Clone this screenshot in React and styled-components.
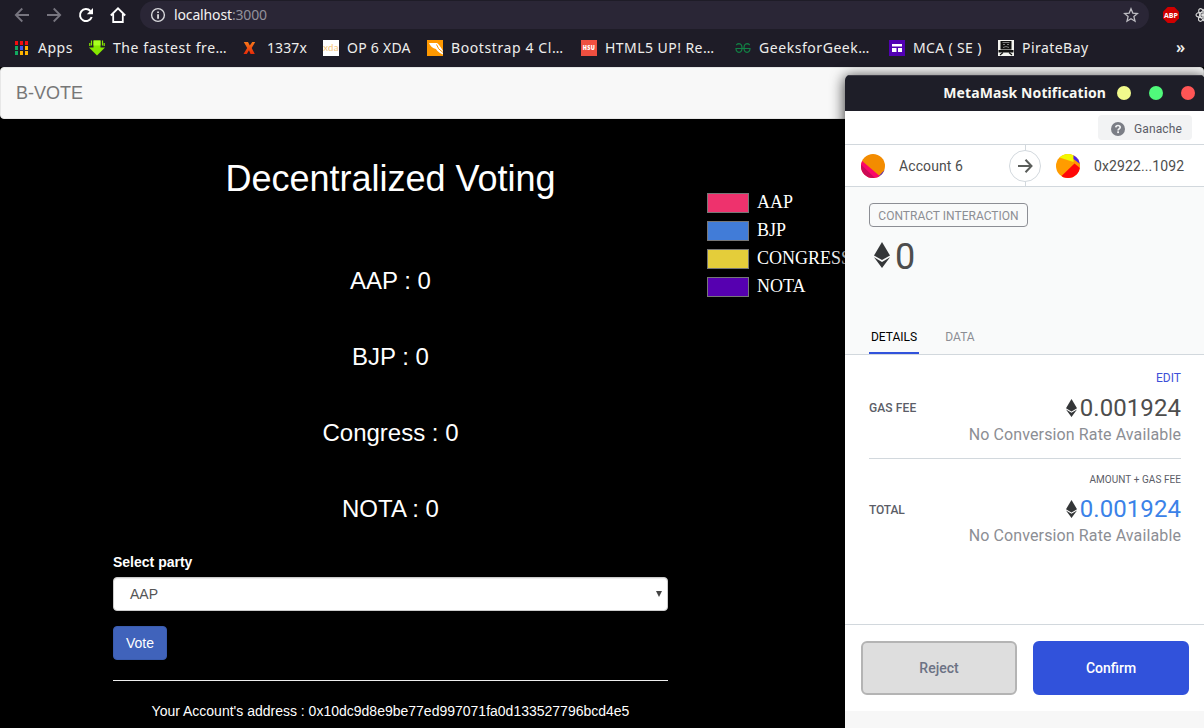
import React from 'react';
import styled, { createGlobalStyle } from 'styled-components';

const Global = createGlobalStyle`
  *, *::before, *::after { box-sizing: border-box; }
  html, body { margin: 0; padding: 0; background: #000; }
  body { width: 1204px; height: 728px; overflow: hidden; }
`;

const ubuntu = `'Noto Sans', 'Open Sans', sans-serif`;
const arial = `'Liberation Sans', Arial, sans-serif`;

const Screen = styled.div`
  position: relative;
  width: 1204px;
  height: 728px;
  overflow: hidden;
  background: #000;
  display: flex;
  flex-direction: column;
`;

/* ---------- browser chrome ---------- */
const Chrome = styled.header`
  height: 67px;
  flex: none;
  background: #1e1c27;
  font-family: ${ubuntu};
  color: #eeeeec;
`;
const Toolbar = styled.div`
  display: flex;
  align-items: center;
  height: 29px;
  padding: 1px 0 0 14px;
`;
const NavIcons = styled.div`
  display: flex;
  gap: 16px;
  width: 126px;
  flex: none;
`;
const AddressBar = styled.div`
  display: flex;
  align-items: center;
  flex: none;
  width: 1009px;
  height: 28px;
  padding: 0 10px;
  border-radius: 14px;
  background: #2a2636;
`;
const Url = styled.span`
  flex: 1;
  margin-left: 8px;
  font-size: 14px;
  line-height: 20px;
  letter-spacing: -0.14px;
  color: #f2f2f2;
  em { font-style: normal; color: #93919b; }
`;
const Extensions = styled.div`
  display: flex;
  gap: 16px;
  margin-left: 14px;
  flex: none;
`;
const BookmarkBar = styled.nav`
  display: flex;
  align-items: center;
  height: 38px;
  padding-left: 13px;
`;
const Bookmark = styled.a`
  display: flex;
  align-items: center;
  flex: none;
  gap: ${p => p.$gap || 8}px;
  width: ${p => p.$w}px;
  font-size: 14px;
  line-height: 20px;
  white-space: nowrap;
  letter-spacing: ${p => p.$ls}px;
  svg { flex: none; }
`;
const More = styled.span`
  flex: none;
  margin-left: 2px;
  padding-bottom: 2px;
  font-size: 16px;
  line-height: 20px;
  font-weight: 600;
`;

/* ---------- page ---------- */
const Navbar = styled.div`
  flex: none;
  height: 52px;
  padding: 15px;
  border: 1px solid #e7e7e7;
  border-radius: 4px;
  background: #f8f8f8;
  font: 18px/20px ${arial};
  color: #777;
`;
const Page = styled.main`
  display: flex;
  align-items: flex-start;
  padding-left: 113px;
  font-family: ${arial};
  color: #fff;
`;
const Ballot = styled.section`
  width: 555px;
  margin-right: 39px;
  padding-top: 40px;
`;
const Title = styled.h1`
  margin: 0 0 44px;
  font-size: 36px;
  line-height: 40px;
  font-weight: 400;
  text-align: center;
`;
const Tally = styled.h3`
  margin: 0;
  font-size: 24px;
  line-height: 76px;
  font-weight: 400;
  text-align: center;
`;
const Label = styled.label`
  display: block;
  margin: 5px 0;
  font-size: 14px;
  line-height: 20px;
  font-weight: 700;
`;
const Select = styled.div`
  display: flex;
  align-items: center;
  justify-content: space-between;
  height: 34px;
  padding: 0 5px 0 16px;
  border: 1px solid #ccc;
  border-radius: 4px;
  box-shadow: inset 0 1px 1px rgba(0, 0, 0, 0.075);
  background: #fff;
  font-size: 14px;
  color: #555;
`;
const VoteButton = styled.button`
  display: block;
  width: 54px;
  height: 34px;
  margin: 15px 0 20px;
  padding: 0;
  border: 1px solid #3a5cae;
  border-radius: 4px;
  background: #4063bb;
  font: 14px/20px ${arial};
  color: #fff;
`;
const Rule = styled.hr`
  height: 1px;
  margin: 0 0 20px;
  border: 0;
  background: #eee;
`;
const Account = styled.p`
  margin: 0;
  font-size: 14px;
  line-height: 20px;
  text-align: center;
`;
const Legend = styled.ul`
  display: flex;
  flex-direction: column;
  gap: 8px;
  margin: 0;
  padding: 74px 0 0;
  list-style: none;
`;
const LegendItem = styled.li`
  display: flex;
  gap: 8px;
  height: 20px;
  font: 18px/18px 'Liberation Serif', serif;
  &::before {
    content: '';
    width: 42px;
    height: 20px;
    border: 1px solid #777;
    background: ${p => p.$color};
  }
`;

/* ---------- wallet window ---------- */
const Wallet = styled.aside`
  position: absolute;
  left: 845px;
  top: 75px;
  width: 360px;
  height: 670px;
  border-radius: 5px 5px 0 0;
  background: #f7f7f7;
  box-shadow: 0 2px 14px 1px rgba(0, 0, 0, 0.75);
  font-family: Roboto, sans-serif;
  overflow: hidden;
`;
const TitleBar = styled.div`
  display: flex;
  align-items: center;
  justify-content: flex-end;
  height: 36px;
  padding: 0 10px 1px 0;
  border-top: 1px solid #3c3b45;
  background: #1e1e28;
  font: 700 14px/20px ${ubuntu};
  letter-spacing: 0.1px;
  color: #f8f8f2;
`;
const WindowDot = styled.i`
  width: 14px;
  height: 14px;
  margin-left: ${p => p.$gap}px;
  border-radius: 50%;
  background: ${p => p.$color};
`;
const NetworkRow = styled.div`
  display: flex;
  justify-content: flex-end;
  height: 34px;
  padding: 4px 13px 0 0;
  border-bottom: 1px solid #d2d8dd;
  background: #fff;
`;
const Network = styled.div`
  display: flex;
  align-items: center;
  gap: 9px;
  width: 94px;
  height: 25px;
  padding: 2px 0 0 13px;
  border-radius: 4px;
  background: #f2f3f4;
  font-size: 12px;
  letter-spacing: 0.12px;
  color: #5b5d67;
`;
const Parties = styled.div`
  display: flex;
  height: 42px;
  border-bottom: 1px solid #d2d8dd;
  background: #fff;
`;
const Party = styled.div`
  display: flex;
  align-items: center;
  flex: none;
  gap: 14px;
  width: ${p => p.$w}px;
  padding-left: ${p => p.$pad}px;
  font-size: 14px;
  letter-spacing: 0.1px;
  color: #4d4d4d;
`;
const Divider = styled.div`
  display: flex;
  align-items: center;
  width: 1px;
  background: #d2d8dd;
`;
const ArrowCircle = styled.div`
  display: flex;
  align-items: center;
  justify-content: center;
  flex: none;
  width: 32px;
  height: 32px;
  margin-left: -16px;
  border: 1px solid #d2d8dd;
  border-radius: 50%;
  background: #fff;
  z-index: 1;
`;
const Summary = styled.div`
  display: flex;
  flex-direction: column;
  height: 168px;
  padding: 16px 24px 0;
  border-bottom: 1px solid #d2d8dd;
  background: #f9fafa;
`;
const Tag = styled.div`
  align-self: flex-start;
  width: 159px;
  height: 24px;
  border: 1px solid #8c8e94;
  border-radius: 4px;
  font-size: 12px;
  line-height: 24px;
  letter-spacing: 0.02px;
  text-align: center;
  color: #8c8e94;
`;
const Amount = styled.div`
  display: flex;
  align-items: center;
  gap: 5px;
  height: 58px;
  padding-left: 5px;
  font-size: 36px;
  line-height: 56px;
  color: #4d4d4d;
  svg { margin-bottom: 2px; }
  span { padding-top: 2px; }
`;
const Tabs = styled.div`
  display: flex;
  gap: 16px;
  margin-top: auto;
`;
const Tab = styled.div`
  width: 50px;
  height: 34px;
  padding-top: 10px;
  border-bottom: 2px solid ${p => (p.$active ? '#3152db' : 'transparent')};
  font-size: 12px;
  line-height: 14px;
  text-align: center;
  color: ${p => (p.$active ? '#000' : '#8c8e94')};
`;
const Details = styled.div`
  height: 269px;
  padding: 0 24px;
  background: #fff;
`;
const FeeRow = styled.div`
  display: flex;
  align-items: center;
  justify-content: space-between;
  height: ${p => p.$h}px;
  padding-top: ${p => (p.$line ? 3 : 0)}px;
  border-bottom: ${p => (p.$line ? '1px solid #d2d8dd' : '0')};
`;
const FeeLabel = styled.div`
  font-size: 12px;
  font-weight: 500;
  letter-spacing: ${p => p.$ls}px;
  color: #5b5d67;
`;
const FeeValues = styled.div`
  display: flex;
  flex-direction: column;
  align-items: flex-end;
`;
const FeeNote = styled.div`
  margin-bottom: ${p => (p.$link ? 7 : 6)}px;
  font-size: ${p => (p.$link ? 12 : 10)}px;
  line-height: 16px;
  letter-spacing: ${p => (p.$link ? 0 : 0.06)}px;
  color: ${p => (p.$link ? '#3d50d8' : '#5b5d67')};
`;
const FeeAmount = styled.div`
  display: flex;
  align-items: center;
  gap: 3px;
  font-size: 24px;
  line-height: 30px;
  letter-spacing: 0.06px;
  color: ${p => (p.$blue ? '#3b82e8' : '#4d4d4d')};
  svg { margin-bottom: 1px; }
`;
const FeeRate = styled.div`
  margin-top: 1px;
  font-size: 16px;
  line-height: 22px;
  letter-spacing: 0.12px;
  color: #8c8e94;
`;
const Actions = styled.div`
  display: flex;
  gap: 16px;
  height: 87px;
  padding: 16px;
  border-top: 1px solid #d2d8dd;
  background: #fff;
`;
const Action = styled.button`
  flex: 1;
  height: 54px;
  padding: 0;
  border: 2px solid ${p => (p.$primary ? '#3152db' : '#b4b4b4')};
  border-radius: 6px;
  background: ${p => (p.$primary ? '#3152db' : '#dedede')};
  font: 500 14px/20px Roboto, sans-serif;
  color: ${p => (p.$primary ? '#fff' : '#6c7284')};
`;

const Eth = ({ w, h }) => (
  <svg width={w} height={h} viewBox="0 0 16 26">
    <path d="M8 0 16 13.400 8 18 0 13.400Z" fill="#343638" />
    <path d="M0 15.200 8 19.900 16 15.200 8 26Z" fill="#343638" />
  </svg>
);

const BackIcon = ({ flip }) => (
  <svg width="16" height="16" viewBox="0 0 16 16" fill="none" stroke="#77757f" strokeWidth="1.8" transform={flip ? 'scale(-1 1)' : undefined}>
    <path d="M15 8H2.200M8.300 1.500 1.800 8l6.500 6.500" />
  </svg>
);
const ReloadIcon = () => (
  <svg width="16" height="16" viewBox="0 0 16 16">
    <path d="M13.700 10A6 6 0 1 1 12.400 4" fill="none" stroke="#fff" strokeWidth="2" />
    <path d="M15 1v6.200H8.800Z" fill="#fff" />
  </svg>
);
const HomeIcon = () => (
  <svg width="16" height="16" viewBox="0 0 16 16">
    <path d="M.8 8.500 8 1.300l7.200 7.200M3.200 7v8h9.600V7" fill="none" stroke="#fff" strokeWidth="1.800" />
  </svg>
);
const InfoIcon = () => (
  <svg width="16" height="16" viewBox="0 0 16 16">
    <circle cx="8" cy="8" r="6.400" fill="none" stroke="#d8d8dc" strokeWidth="1.400" />
    <path d="M7.200 4.400h1.700v1.700H7.200zM7.200 7.200h1.700v4.600H7.200z" fill="#e6e6e8" />
  </svg>
);
const StarIcon = () => (
  <svg width="16" height="16" viewBox="0 0 16 16">
    <path d="m8 1.800 1.800 4.300 4.700.4-3.600 3.100 1.100 4.600L8 11.700l-4 2.500 1.100-4.600L1.500 6.500l4.700-.4Z" fill="none" stroke="#bdbcc2" strokeWidth="1.300" />
  </svg>
);
const AbpIcon = () => (
  <svg width="16" height="16" viewBox="0 0 16 16">
    <path d="M4.700 0h6.600L16 4.700v6.600L11.300 16H4.700L0 11.300V4.700Z" fill="#d00000" />
    <text x="8" y="10.700" textAnchor="middle" textLength="14" lengthAdjust="spacingAndGlyphs" fontFamily="Open Sans, sans-serif" fontWeight="700" fontSize="7.500" fill="#fff">ABP</text>
  </svg>
);
const AtomIcon = () => (
  <svg width="16" height="16" viewBox="0 0 16 16" fill="none" stroke="#dcdcdc" strokeWidth="1.100">
    <ellipse cx="8" cy="8" rx="7" ry="2.800" />
    <ellipse cx="8" cy="8" rx="7" ry="2.800" transform="rotate(60 8 8)" />
    <ellipse cx="8" cy="8" rx="7" ry="2.800" transform="rotate(120 8 8)" />
    <circle cx="8" cy="8" r="1.300" fill="#dcdcdc" />
  </svg>
);

const appColors = ['#f10f0f', '#f10f0f', '#f10f0f', '#12a860', '#4056f4', '#ffb400', '#12a860', '#ffb400', '#ffb400'];
const AppsIcon = () => (
  <svg width="16" height="16" viewBox="0 0 16 16">
    {appColors.map((c, i) => (
      <rect key={i} x={2 + (i % 3) * 5} y={1 + Math.floor(i / 3) * 5} width="3" height="4" fill={c} />
    ))}
  </svg>
);
const DownloadIcon = () => (
  <svg width="16" height="16" viewBox="0 0 16 16">
    <path d="M4.500.5h7v7H16l-8 8-8-8h4.500Z" fill="#86e800" />
    <path d="M2.500.5v5M13.500.5v5M.8 3v3M15.200 3v3" stroke="#86e800" strokeWidth="1.200" />
    <path d="M4.500.5h7v5h-7Z" fill="#a8ff20" />
  </svg>
);
const LeetIcon = () => (
  <svg width="16" height="16" viewBox="0 0 16 16">
    <linearGradient id="leet" x1="0" y1="0" x2="0" y2="1">
      <stop offset="0" stopColor="#f8791a" />
      <stop offset="1" stopColor="#e62a08" />
    </linearGradient>
    <path d="M.8 2h4.200l1.800 3.600L9.300 2h2.900L8.700 7.900l3.100 6h-4.300L6 10.300 3.800 14H.5L4.200 8Z" fill="url(#leet)" />
  </svg>
);
const XdaIcon = () => (
  <svg width="16" height="16" viewBox="0 0 16 16">
    <rect width="16" height="16" fill="#fff" />
    <text x="8" y="11" textAnchor="middle" textLength="15.500" lengthAdjust="spacingAndGlyphs" fontFamily="Lato, sans-serif" fontSize="9.500" fill="#f6c478">xda</text>
  </svg>
);
const BootstrapIcon = () => (
  <svg width="16" height="16" viewBox="0 0 16 16">
    <rect width="16" height="16" fill="#ff9800" />
    <path d="M2 3h8q2 1 6 8v3.500q-2.500-.5-5.500-3.500-1-1-1.500-2Q4 8 2 3Z" fill="#fff" />
    <path d="M9.500 4.500q1 4.500 6.500 8" fill="none" stroke="#ff9800" strokeWidth="1" />
  </svg>
);
const HsuIcon = () => (
  <svg width="16" height="16" viewBox="0 0 16 16">
    <rect width="16" height="16" fill="#ef4f40" />
    <text x="8" y="10.300" textAnchor="middle" textLength="12.500" lengthAdjust="spacingAndGlyphs" fontFamily="Open Sans, sans-serif" fontWeight="800" fontSize="6.500" fill="#fff">HSU</text>
  </svg>
);
const GfgIcon = () => (
  <svg width="16" height="16" viewBox="0 0 16 16" fill="none" stroke="#128044" strokeWidth="1.200">
    <path d="M1.300 5Q2.500 3.700 4 3.700 7 4 7 8T4 12.300Q1 12 1 8.500H15Q15 12 12 12.300 9 12 9 8T12 3.700Q13.500 3.700 14.700 5" />
  </svg>
);
const McaIcon = () => (
  <svg width="16" height="16" viewBox="0 0 16 16">
    <rect width="16" height="16" fill="#5200b4" />
    <path d="M3 4h10v2.500H3zM3 8h4.500v4H3zM9 8h4v4H9z" fill="#fff" />
  </svg>
);
const PirateIcon = () => (
  <svg width="16" height="16" viewBox="0 0 16 16">
    <rect width="16" height="16" fill="#f4f4f0" />
    <path d="M2.500 1h11v8.500h-11zM.5 10h15v2.500H.5z" fill="#111" />
    <path d="M4.500 2.500h7M5 4.500h2M9 4.500h2M5 7.500l3-1 3 1" stroke="#999" strokeWidth=".8" fill="none" />
    <path d="M2 15l3-2.500M14 15l-3-2.500" stroke="#111" strokeWidth="1.200" />
  </svg>
);

const bookmarks = [
  { Icon: AppsIcon, text: 'Apps', w: 76, ls: 0.5, gap: 9 },
  { Icon: DownloadIcon, text: 'The fastest fre…', w: 154, ls: 0.58 },
  { Icon: LeetIcon, text: '1337x', w: 80, ls: 0.1 },
  { Icon: XdaIcon, text: 'OP 6 XDA', w: 104, ls: 0.25 },
  { Icon: BootstrapIcon, text: 'Bootstrap 4 Cl…', w: 154, ls: 0.6 },
  { Icon: HsuIcon, text: 'HTML5 UP! Re…', w: 154, ls: 0.45 },
  { Icon: GfgIcon, text: 'GeeksforGeek…', w: 154, ls: 0.55 },
  { Icon: McaIcon, text: 'MCA ( SE )', w: 109, ls: 0.35 },
  { Icon: PirateIcon, text: 'PirateBay', w: 176, ls: 0.45 },
];

const parties = [
  { name: 'AAP', legend: 'AAP', color: '#ee326d' },
  { name: 'BJP', legend: 'BJP', color: '#417cd8' },
  { name: 'Congress', legend: 'CONGRESS', color: '#e4cd3a' },
  { name: 'NOTA', legend: 'NOTA', color: '#5600b0' },
];

const IdenticonA = () => (
  <svg width="24" height="24" viewBox="0 0 24 24">
    <clipPath id="ca"><circle cx="12" cy="12" r="12" /></clipPath>
    <g clipPath="url(#ca)">
      <path d="M0 0h24v24H0z" fill="#f38c00" />
      <path d="M17 23 24 15.500V24Z" fill="#3a1ae0" />
      <path d="M0 6 21 24H0Z" fill="#fb0768" />
      <path d="M0 10.500 14 24H0Z" fill="#cc0a56" />
    </g>
  </svg>
);
const IdenticonB = () => (
  <svg width="24" height="24" viewBox="0 0 24 24">
    <clipPath id="cb"><circle cx="12" cy="12" r="12" /></clipPath>
    <g clipPath="url(#cb)">
      <path d="M0 0h24v24H0z" fill="#ff9c00" />
      <path d="M2 3 17.500 8V0H2Z" fill="#f2f800" />
      <path d="M17.500 0v5L24 10V0Z" fill="#4a22ee" />
      <path d="M5.500 22 18.500 9.500 24 14v10H5.500Z" fill="#ff0808" />
    </g>
  </svg>
);

const Fee = ({ label, note, link, blue, h, line, ls }) => (
  <FeeRow $h={h} $line={line}>
    <FeeLabel $ls={ls}>{label}</FeeLabel>
    <FeeValues>
      <FeeNote $link={link}>{note}</FeeNote>
      <FeeAmount $blue={blue}><Eth w={11} h={18} />0.001924</FeeAmount>
      <FeeRate>No Conversion Rate Available</FeeRate>
    </FeeValues>
  </FeeRow>
);

export default function App() {
  return (
    <Screen>
      <Global />
      <Chrome>
        <Toolbar>
          <NavIcons><BackIcon /><BackIcon flip /><ReloadIcon /><HomeIcon /></NavIcons>
          <AddressBar>
            <InfoIcon />
            <Url>localhost<em>:3000</em></Url>
            <StarIcon />
          </AddressBar>
          <Extensions><AbpIcon /><AtomIcon /></Extensions>
        </Toolbar>
        <BookmarkBar>
          {bookmarks.map(({ Icon, text, w, ls, gap }) => (
            <Bookmark key={text} $w={w} $ls={ls} $gap={gap}><Icon />{text}</Bookmark>
          ))}
          <More>»</More>
        </BookmarkBar>
      </Chrome>
      <Navbar>B-VOTE</Navbar>
      <Page>
        <Ballot>
          <Title>Decentralized Voting</Title>
          {parties.map(p => <Tally key={p.name}>{p.name} : 0</Tally>)}
          <Label>Select party</Label>
          <Select>
            AAP
            <svg width="6" height="6" viewBox="0 0 6 6"><path d="M0 0h6L3 6Z" fill="#444" /></svg>
          </Select>
          <VoteButton>Vote</VoteButton>
          <Rule />
          <Account>Your Account's address : 0x10dc9d8e9be77ed997071fa0d133527796bcd4e5</Account>
        </Ballot>
        <Legend>
          {parties.map(p => <LegendItem key={p.name} $color={p.color}>{p.legend}</LegendItem>)}
        </Legend>
      </Page>
      <Wallet>
        <TitleBar>
          MetaMask Notification
          <WindowDot $gap={11} $color="#f1fa8c" />
          <WindowDot $gap={18} $color="#50fa7b" />
          <WindowDot $gap={18} $color="#ff5555" />
        </TitleBar>
        <NetworkRow>
          <Network>
            <svg width="14" height="14" viewBox="0 0 14 14">
              <circle cx="7" cy="7" r="7" fill="#7b7e86" />
              <path d="M4.800 5.400Q4.900 3.500 7 3.500T9.200 5.300Q9.200 6.300 8 6.900 7.100 7.400 7.100 8.400" fill="none" stroke="#f2f3f4" strokeWidth="1.700" />
              <rect x="6.200" y="9.300" width="1.800" height="1.800" fill="#f2f3f4" />
            </svg>
            Ganache
          </Network>
        </NetworkRow>
        <Parties>
          <Party $w={180} $pad={16}><IdenticonA />Account 6</Party>
          <Divider>
            <ArrowCircle>
              <svg width="16" height="16" viewBox="0 0 16 16" fill="none" stroke="#5b5e5b" strokeWidth="2">
                <path d="M1 8h13M8.500 1.700 14.500 8l-6 6.300" />
              </svg>
            </ArrowCircle>
          </Divider>
          <Party $w={179} $pad={30}><IdenticonB />0x2922...1092</Party>
        </Parties>
        <Summary>
          <Tag>CONTRACT INTERACTION</Tag>
          <Amount><Eth w={16} h={26} /><span>0</span></Amount>
          <Tabs><Tab $active>DETAILS</Tab><Tab>DATA</Tab></Tabs>
        </Summary>
        <Details>
          <Fee label="GAS FEE" note="EDIT" link h={104} line ls={0.12} />
          <Fee label="TOTAL" note="AMOUNT + GAS FEE" blue h={101} ls={-0.15} />
        </Details>
        <Actions>
          <Action>Reject</Action>
          <Action $primary>Confirm</Action>
        </Actions>
      </Wallet>
    </Screen>
  );
}
